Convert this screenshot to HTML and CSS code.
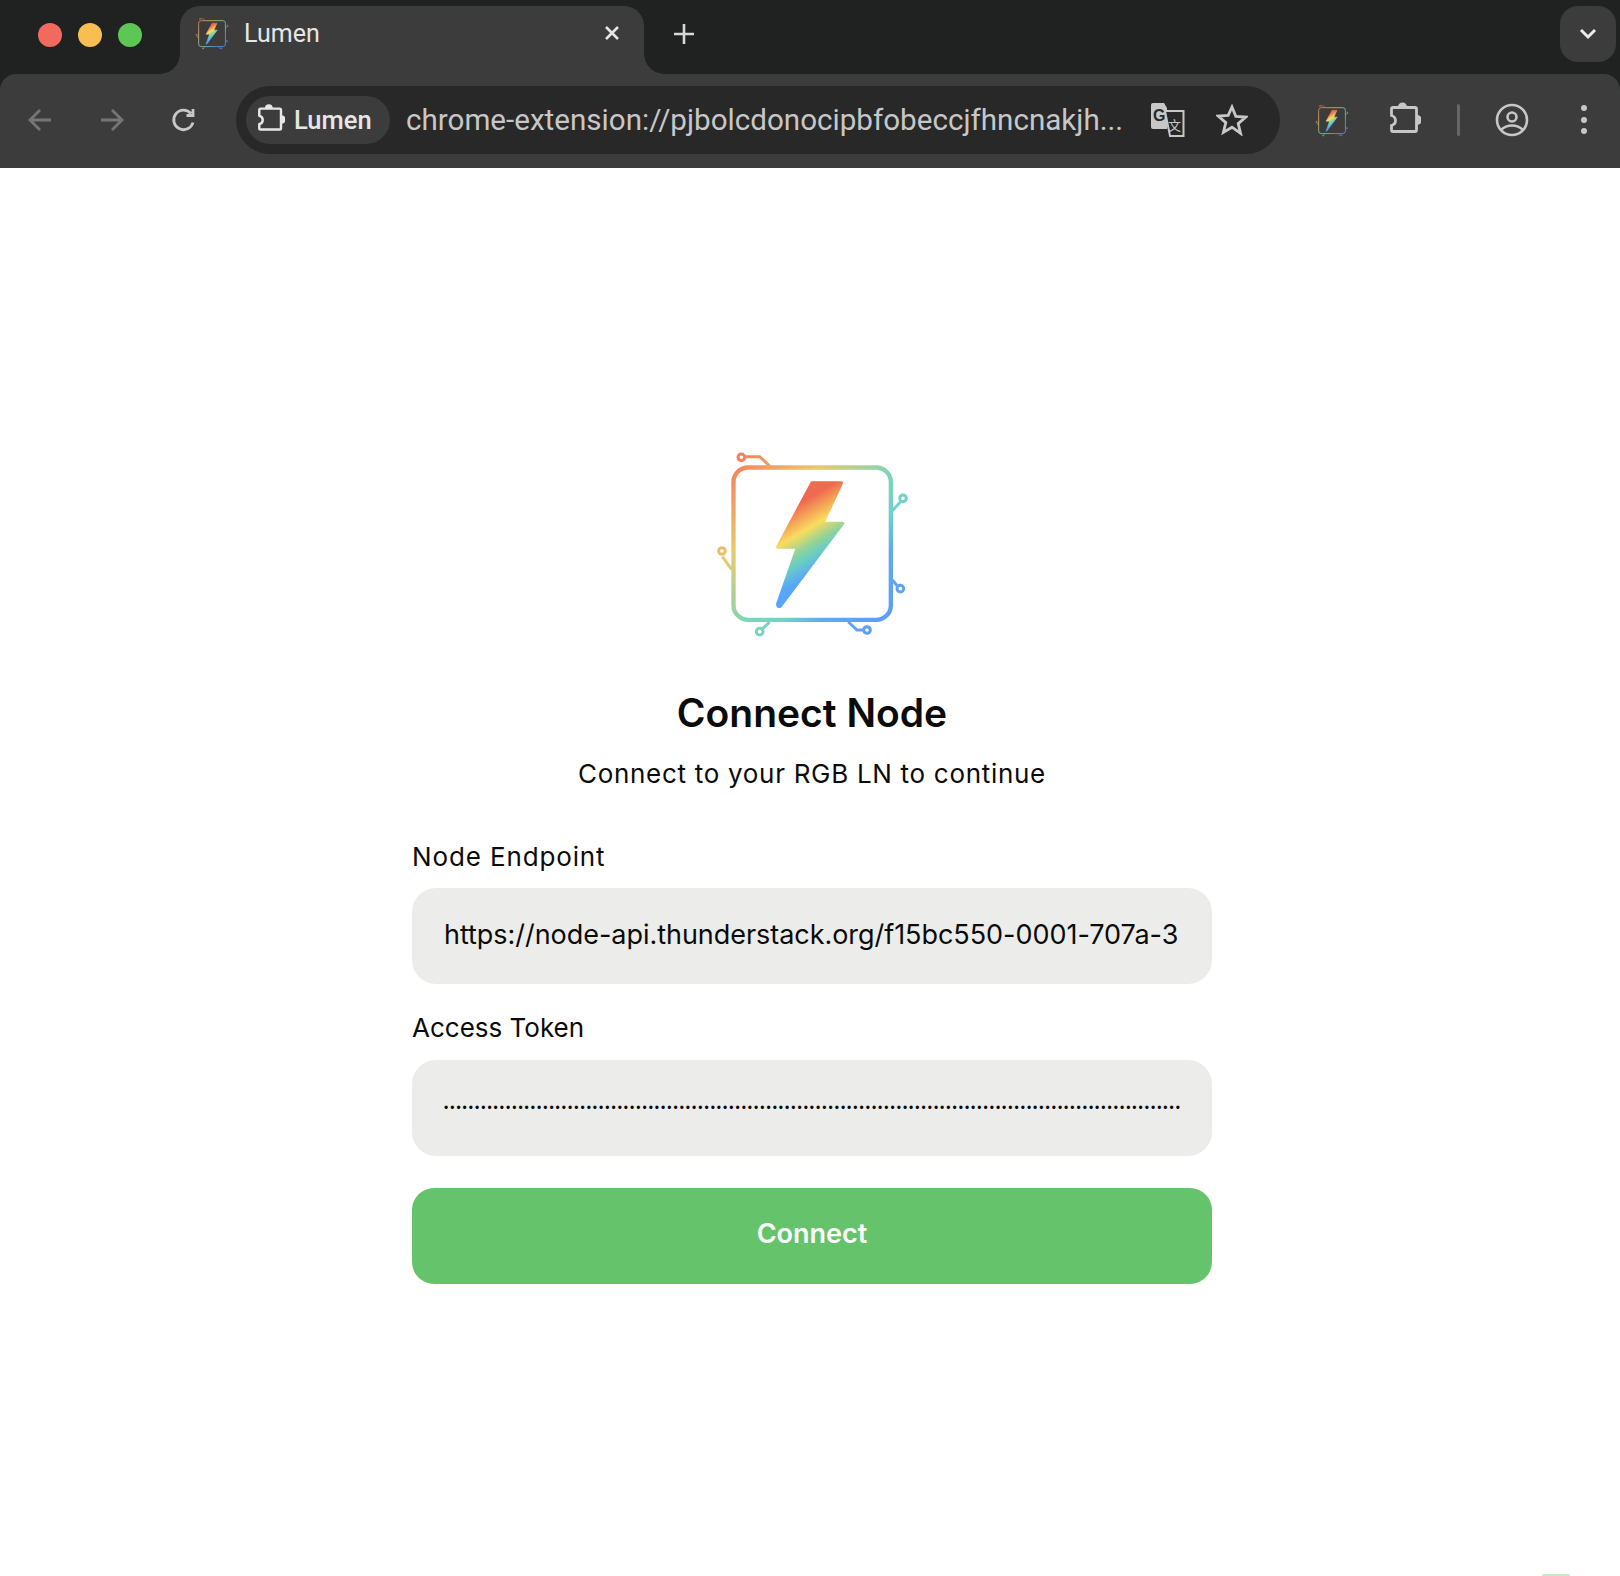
FILE: index.html
```html
<!DOCTYPE html>
<html lang="en">
    <head>
        <meta charset="UTF-8">
        <title>Lumen</title>
        <link rel="stylesheet" href="styles.css">
    </head>
    <body>
        <svg class="defs" width="0" height="0">
            <defs>
                <linearGradient id="frame-grad" gradientUnits="userSpaceOnUse" x1="90" y1="70" x2="580" y2="550">
                    <stop offset="0" stop-color="#f47c5c"/>
                    <stop offset="0.28" stop-color="#e9c96c"/>
                    <stop offset="0.52" stop-color="#7fd6b4"/>
                    <stop offset="0.65" stop-color="#72d2c8"/>
                    <stop offset="0.77" stop-color="#62a8f0"/>
                    <stop offset="1" stop-color="#5b9cfb"/>
                </linearGradient>
                <linearGradient id="bolt-grad" gradientUnits="userSpaceOnUse" x1="400" y1="130" x2="516" y2="324">
                    <stop offset="0" stop-color="#ee6a50"/>
                    <stop offset="0.34" stop-color="#fadc5e"/>
                    <stop offset="0.55" stop-color="#8fd29a"/>
                    <stop offset="0.66" stop-color="#6ccfc0"/>
                    <stop offset="0.88" stop-color="#58a6fb"/>
                </linearGradient>
                <symbol id="lumen-logo" viewBox="5 0 660 600">
                    <g fill="none" stroke="url(#frame-grad)" stroke-width="13">
                        <rect x="99.5" y="82.5" width="472" height="457" rx="44"/>
                        <path d="M208 78 L178 50 H135" stroke-width="9"/>
                        <path d="M576 212 L600 186" stroke-width="9"/>
                        <path d="M94 388 L66 350" stroke-width="9"/>
                        <path d="M576 420 L590 437" stroke-width="9"/>
                        <path d="M444 546 L470 570 H488" stroke-width="9"/>
                        <path d="M208 546 L187 566" stroke-width="9"/>
                        <circle cx="123" cy="52" r="10" stroke-width="9"/>
                        <circle cx="608" cy="175" r="10" stroke-width="9"/>
                        <circle cx="65" cy="333" r="10" stroke-width="9"/>
                        <circle cx="600" cy="446" r="10" stroke-width="9"/>
                        <circle cx="500" cy="570" r="10" stroke-width="9"/>
                        <circle cx="178" cy="575" r="10" stroke-width="9"/>
                    </g>
                    <path fill="url(#bolt-grad)" stroke="url(#bolt-grad)" stroke-width="10" stroke-linejoin="round" d="M335 129 H423 L367 250 H427 L240 498 Q232 502 232 492 L292 321 H232 Z"/>
                </symbol>
                <symbol id="puzzle" viewBox="0 0 32 38">
                    <path fill="none" stroke="currentColor" stroke-width="2.8" d="M4 6.5H26a1.5 1.5 0 0 1 1.5 1.5V29a1.5 1.5 0 0 1-1.5 1.5H4A1.5 1.5 0 0 1 2.5 29V24.5c3-1 4-3 4-5s-1-4-4-5V8A1.5 1.5 0 0 1 4 6.5z"/>
                    <path fill="currentColor" d="M9 6a4.5 4.5 0 0 1 9 0zM28 14a5 5 0 0 1 0 10z"/>
                </symbol>
            </defs>
        </svg>

        <header class="browser">
            <div class="tabstrip">
                <div class="lights">
                    <span class="light light-red"></span>
                    <span class="light light-yellow"></span>
                    <span class="light light-green"></span>
                </div>
                <div class="tab">
                    <svg class="tab-icon"><use href="#lumen-logo"/></svg>
                    <span class="tab-title">Lumen</span>
                    <svg class="tab-close" viewBox="0 0 16 16"><path d="M2 2l12 12M14 2L2 14"/></svg>
                </div>
                <svg class="new-tab" viewBox="0 0 22 22"><path d="M11 1v20M1 11h20"/></svg>
                <div class="tab-menu">
                    <svg viewBox="0 0 18 12"><path d="M2 2l7 7 7-7"/></svg>
                </div>
            </div>
            <div class="toolbar">
                <div class="nav-btn nav-off">
                    <svg viewBox="0 0 26 26"><path d="M24 13H3M13 3L3 13l10 10"/></svg>
                </div>
                <div class="nav-btn nav-off">
                    <svg viewBox="0 0 26 26"><path d="M2 13h21M13 3l10 10-10 10"/></svg>
                </div>
                <div class="nav-btn">
                    <svg viewBox="0 0 26 26"><path d="M22 15.5A9.8 9.8 0 1 1 20 6.5M22 2v6.5h-6.5"/></svg>
                </div>
                <div class="omnibox">
                    <div class="chip">
                        <svg class="chip-icon"><use href="#puzzle"/></svg>
                        <span>Lumen</span>
                    </div>
                    <span class="url">chrome-extension://pjbolcdonocipbfobeccjfhncnakjh...</span>
                    <svg class="translate" viewBox="0 0 34 34">
                        <path class="translate-back" d="M2 0h11l3 5v21H2a2 2 0 0 1-2-2V2a2 2 0 0 1 2-2z"/>
                        <text class="translate-g" x="2" y="18">G</text>
                        <path class="translate-front" d="M14 8h18.5v25H19z"/>
                        <text class="translate-cjk" x="17" y="27">文</text>
                    </svg>
                    <svg class="star" viewBox="0 0 32 32"><path d="M16 3l3.8 9.3 10 .8-7.6 6.5 2.4 9.8L16 23.2l-8.6 5.2 2.4-9.8-7.6-6.5 10-.8z"/></svg>
                </div>
                <div class="tools">
                    <svg class="ext-lumen"><use href="#lumen-logo"/></svg>
                    <svg class="ext-puzzle"><use href="#puzzle"/></svg>
                    <span class="tool-sep"></span>
                    <svg class="profile" viewBox="0 0 34 34">
                        <circle cx="17" cy="17" r="15"/>
                        <circle cx="17" cy="14" r="4.5"/>
                        <path d="M6 27c3-3 7-4.5 11-4.5s8 1.5 11 4.5"/>
                    </svg>
                    <div class="kebab"><span></span><span></span><span></span></div>
                </div>
            </div>
        </header>

        <main class="connect">
            <svg class="logo"><use href="#lumen-logo"/></svg>
            <h1>Connect Node</h1>
            <p class="subtitle">Connect to your RGB LN to continue</p>
            <form class="connect-form">
                <label class="field-label field-label-wide" for="node-endpoint">Node Endpoint</label>
                <input class="field" id="node-endpoint" type="text" value="https://node-api.thunderstack.org/f15bc550-0001-707a-3">
                <label class="field-label field-label-second" for="access-token">Access Token</label>
                <input class="field field-secret" id="access-token" type="password" value="aaaaaaaaaaaaaaaaaaaaaaaaaaaaaaaaaaaaaaaaaaaaaaaaaaaaaaaaaaaaaaaaaaaaaaaaaaaaaaaaaaaaaaaaaaaaaaaaaaaaaaaaaaaaaaaaaaaaaaa">
                <button class="connect-button" type="button">Connect</button>
            </form>
        </main>
        <div class="corner-peek"></div>
    </body>
</html>
```

FILE: styles.css
```css
* {
    box-sizing: border-box;
}

body {
    margin: 0;
    background-color: white;
    color: #0b0b0b;
    font-family: Inter, "Noto Sans", sans-serif;
    position: relative;
    height: 1576px;
    overflow: hidden;
}

.defs {
    position: absolute;
}

/* browser chrome */
.browser {
    background-color: #202221;
    font-family: Roboto, "Liberation Sans", sans-serif;
}

.tabstrip {
    height: 74px;
    display: flex;
    align-items: flex-start;
    position: relative;
}

.lights {
    width: 180px;
    height: 74px;
    padding: 23px 0 0 38px;
    display: flex;
    gap: 16px;
}

.light {
    width: 24px;
    height: 24px;
    border-radius: 50%;
}

.light-red { background-color: #f16a5e; }
.light-yellow { background-color: #f7bf4f; }
.light-green { background-color: #5ec654; }

.tab {
    width: 464px;
    height: 68px;
    margin-top: 6px;
    background-color: #3c3c3c;
    border-radius: 20px 20px 0 0;
    display: flex;
    align-items: center;
    padding: 0 24px 14px 13px;
    position: relative;
}

.tab::before,
.tab::after {
    content: "";
    position: absolute;
    bottom: 0;
    width: 20px;
    height: 20px;
}

.tab::before {
    left: -20px;
    background: radial-gradient(circle at 0 0, #202221 19.5px, #3c3c3c 20px);
}

.tab::after {
    right: -20px;
    background: radial-gradient(circle at 100% 0, #202221 19.5px, #3c3c3c 20px);
}

.tab-icon {
    width: 38px;
    height: 34px;
    flex-shrink: 0;
}

.tab-title {
    margin-left: 13px;
    flex-grow: 1;
    font-size: 25px;
    color: #e6e6e6;
}

.tab-close {
    width: 16px;
    height: 16px;
    fill: none;
    stroke: #e6e6e6;
    stroke-width: 2.6;
}

.new-tab {
    width: 22px;
    height: 22px;
    margin: 23px 0 0 29px;
    fill: none;
    stroke: #d8d8d8;
    stroke-width: 2.6;
}

.tab-menu {
    width: 56px;
    height: 56px;
    margin: 6px 4px 0 auto;
    background-color: #3c3c3c;
    border-radius: 18px;
    display: flex;
    align-items: center;
    justify-content: center;
}

.tab-menu svg {
    width: 18px;
    height: 12px;
    fill: none;
    stroke: #ececec;
    stroke-width: 3;
}

.toolbar {
    height: 94px;
    background-color: #3c3c3c;
    border-radius: 16px 16px 0 0;
    display: flex;
    align-items: center;
    gap: 24px;
    padding: 0 0 3px 16px;
}

.nav-btn {
    width: 48px;
    height: 48px;
    display: flex;
    align-items: center;
    justify-content: center;
}

.nav-btn svg {
    width: 26px;
    height: 26px;
    fill: none;
    stroke: #c8c8c8;
    stroke-width: 2.8;
}

.nav-off svg {
    stroke: #767676;
}

.omnibox {
    width: 1044px;
    height: 68px;
    margin-left: 4px;
    background-color: #282828;
    border-radius: 34px;
    display: flex;
    align-items: center;
    padding: 0 32px 0 10px;
}

.chip {
    width: 144px;
    height: 48px;
    background-color: #3c3c3c;
    border-radius: 24px;
    display: flex;
    align-items: center;
    padding-left: 11px;
    color: #e6e6e6;
    font-size: 25.5px;
    font-weight: 500;
}

.chip-icon {
    width: 28px;
    height: 33px;
    color: #e6e6e6;
    margin-right: 9px;
}

.url {
    margin-left: 16px;
    flex-grow: 1;
    font-size: 29.6px;
    color: #c7c7c7;
    white-space: nowrap;
}

.translate {
    width: 34px;
    height: 34px;
    margin-right: 31px;
}

.translate-back {
    fill: #c7c7c7;
}

.translate-g {
    font-family: "Liberation Sans", sans-serif;
    font-size: 16px;
    font-weight: 700;
    fill: #282828;
}

.translate-front {
    fill: #282828;
    stroke: #c7c7c7;
    stroke-width: 2;
}

.translate-cjk {
    font-family: "Noto Sans CJK SC", sans-serif;
    font-size: 13px;
    fill: #c7c7c7;
}

.star {
    width: 32px;
    height: 32px;
    fill: none;
    stroke: #c7c7c7;
    stroke-width: 2.8;
}

.tools {
    flex-grow: 1;
    display: flex;
    align-items: center;
    margin-left: 1px;
}

.ext-lumen {
    width: 38px;
    height: 34px;
    margin-left: 8px;
}

.ext-puzzle {
    width: 32px;
    height: 38px;
    margin-left: 38px;
    color: #c7c7c7;
}

.tool-sep {
    width: 3px;
    height: 32px;
    margin-left: 36px;
    background-color: #666666;
    border-radius: 2px;
}

.profile {
    width: 34px;
    height: 34px;
    margin-left: 35px;
    fill: none;
    stroke: #c7c7c7;
    stroke-width: 2.6;
}

.kebab {
    margin-left: 52px;
    display: flex;
    flex-direction: column;
    gap: 5.5px;
}

.kebab span {
    width: 6px;
    height: 6px;
    border-radius: 50%;
    background-color: #c7c7c7;
}

/* connect form */
.connect {
    width: 800px;
    margin: 0 auto;
    padding-top: 272px;
    text-align: center;
    position: relative;
    left: 2px;
}

.logo {
    display: block;
    width: 220px;
    height: 200px;
    margin: 0 auto;
}

h1 {
    margin: 49px 0 0;
    font-size: 39px;
    line-height: 48px;
    font-weight: 600;
}

.subtitle {
    margin: 19px 0 0;
    font-size: 26px;
    line-height: 36px;
    letter-spacing: 0.7px;
}

.connect-form {
    margin-top: 49px;
    display: flex;
    flex-direction: column;
    text-align: left;
}

.field-label {
    font-size: 26px;
    line-height: 32px;
    margin-bottom: 15px;
}

.field-label-wide {
    letter-spacing: 0.87px;
}

.field-label-second {
    margin-top: 28px;
    margin-bottom: 16px;
}

.field {
    width: 800px;
    height: 96px;
    border: 0;
    outline: none;
    border-radius: 24px;
    background-color: #ecedea;
    padding: 0 32px 4px;
    font-family: inherit;
    font-size: 27px;
    letter-spacing: -0.04px;
    color: #0b0b0b;
}

.field-secret {
    font-family: "Liberation Sans", sans-serif;
    font-size: 12px;
    letter-spacing: 2px;
    padding-bottom: 0;
}

.connect-button {
    width: 800px;
    height: 96px;
    margin-top: 32px;
    border: 0;
    border-radius: 22px;
    background-color: #65c46b;
    color: white;
    font-family: inherit;
    font-size: 27px;
    font-weight: 600;
    padding-bottom: 6px;
}

.corner-peek {
    position: absolute;
    right: 50px;
    bottom: 0;
    width: 28px;
    height: 2px;
    border-radius: 14px 14px 0 0;
    background-color: #c4ebc6;
}
```
